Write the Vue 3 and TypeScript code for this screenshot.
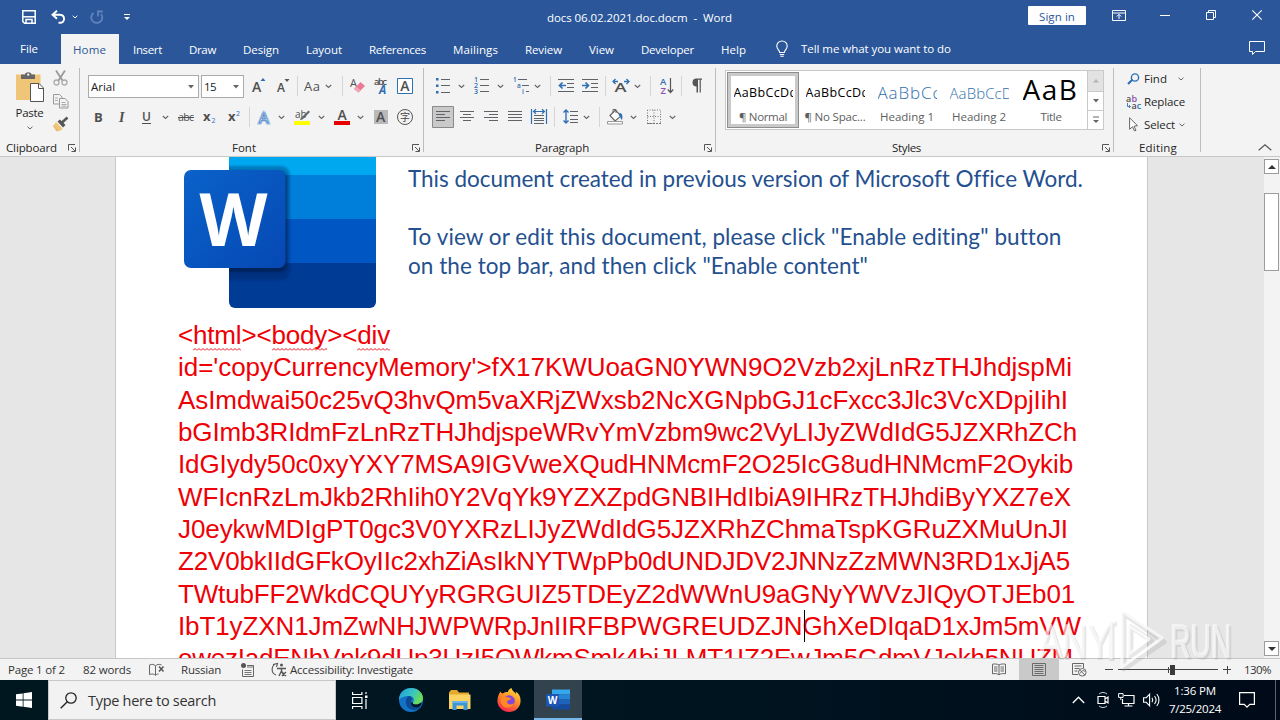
<script setup lang="ts">
import { h, type FunctionalComponent, type ObjectDirective } from 'vue'

// Tracks a label out (or in) so that it fills the given width in pixels.
const vFit: ObjectDirective<HTMLElement, number> = {
  mounted(el, { value }) {
    const count = (el.textContent ?? '').length
    const width = el.getBoundingClientRect().width
    if (count > 0) el.style.letterSpacing = `${(value - width) / count}px`
  },
}

const G = '#5f6368'
const B = '#2f6fb5'
const lines = (rows: number[][], color = G) =>
  rows.map(([x1, x2, y]) => `<path d="M${x1} ${y}H${x2}" stroke="${color}"/>`).join('')
const glyph = (x: number, y: number, s: number, text: string, extra = '') =>
  `<text x="${x}" y="${y}" font-size="${s}" font-family="Open Sans, sans-serif" fill="#505050" ${extra}>${text}</text>`

const wordApp =
  '<path d="M6 1.500h18v5H6z" fill="#35a7ec"/><path d="M6 6.500h18v5H6z" fill="#2585d8"/><path d="M6 11.500h18v5H6z" fill="#1b63bd"/><path d="M6 16.500h18v5H6z" fill="#164a9c"/><rect y="6" width="13" height="12.500" rx="1" fill="#1b55b5"/>' +
  '<text x="1.800" y="16" font-size="10" font-weight="700" font-family="Open Sans, sans-serif" fill="#fff">W</text>'

// name -> [width, height, markup]
const icons: Record<string, [number, number, string]> = {
  save: [14, 14, '<path d="M.8.8h12.400v12.400H2.500L.8 11.500z" fill="none" stroke="#fff" stroke-width="1.500"/><path d="M1 6.800h12" stroke="#fff" stroke-width="1.500"/><path d="M4 13V9.500h6V13" fill="none" stroke="#fff" stroke-width="1.500"/>'],
  undo: [14, 14, '<path d="M6 .8 1.500 4.800 6 8.800M1.800 4.800H8.500c6 0 6 8 .5 8H7.500" fill="none" stroke="#fff" stroke-width="1.900"/>'],
  redo: [14, 14, '<path d="M3.500 3A5.500 5.500 0 1 0 11 4M12.800 1.500H8V6.500" fill="none" stroke="#5f83ba" stroke-width="1.800"/>'],
  chevW: [6, 4, '<path d="M.7.7 3 3 5.300.7" fill="none" stroke="#fff"/>'],
  custom: [6, 8, '<path d="M0 1.500h6" stroke="#fff"/><path d="M0 4h6L3 7z" fill="#fff"/>'],
  ribbon: [14, 11, '<path d="M.5.500h13v10H.500zM.5 3h13" fill="none" stroke="#fff"/><path d="M7 9V4.500M4.800 6.500 7 4.300l2.200 2.200" fill="none" stroke="#fff"/>'],
  min: [10, 10, '<path d="M0 5.500h10" stroke="#fff"/>'],
  restore: [10, 10, '<path d="M.5 2.500h7v7h-7zM2.500 2V.500h7v7H8" fill="none" stroke="#fff"/>'],
  close: [10, 10, '<path d="M.3.300l9.400 9.400M9.700.300.300 9.700" stroke="#fff" stroke-width="1.100"/>'],
  bulb: [12, 16, '<path d="M3.700 11.500C3.500 9 .8 8.300.8 5a5.200 5 0 0 1 10.400 0c0 3.300-2.700 4-2.900 6.500zM3.800 13.500h4.400M4.300 15.300h3.400" fill="none" stroke="#fff" stroke-width="1.100"/>'],
  comment: [16, 14, '<path d="M.5.500h15v10H6.500L3.500 13.500V10.500H.500z" fill="none" stroke="#fff"/>'],
  chev: [7, 24, '<path d="M.8 11 3.500 13.500 6.200 11" fill="none" stroke="#666" stroke-width="1.100"/>'],
  chevS: [6, 4, '<path d="M.5.700 3 3 5.500.700" fill="none" stroke="#666"/>'],
  sep: [1, 24, '<path d="M.5 2v20" stroke="#d5d5d5"/>'],
  paste: [28, 32, '<path d="M0 3.500h24.500V29H0z" fill="#efc578"/><path d="M5 8V3.500h4C9 .500 15.500.500 15.500 3.500H19V8z" fill="#666"/><circle cx="12.200" cy="3.600" r="1.200" fill="#f3f3f3"/><path d="M14.500 12.500h8.500l4.500 4.500v13.500h-13z" fill="#fff" stroke="#555"/><path d="M22.500 12.500v5h5" fill="none" stroke="#555"/>'],
  cut: [15, 16, '<path d="M3 .500l6.500 10M12 .500 5.500 10.500" stroke="#9a9a9a" stroke-width="1.800"/><circle cx="3.500" cy="12.500" r="2.500" fill="none" stroke="#aaa" stroke-width="1.300"/><circle cx="11.500" cy="12.500" r="2.500" fill="none" stroke="#aaa" stroke-width="1.300"/>'],
  copy: [16, 15, '<g fill="#f3f3f3" stroke="#999"><path d="M.5.500h6l2.500 2.500v7H.500z"/><path d="M6.500 4.500h5.500l3 3v6.500H6.500z"/></g><path d="M2 4h3M2 6.500h3M8.500 8.500h4M8.500 10.500h5M8.500 12.200h5" stroke="#aaa"/>'],
  painter: [16, 15, '<path d="M1 7.500 7 13.500 3.500 14.500 0 9z" fill="#e8bd70"/><path d="M3 5 9.500 11.500 7.500 14 1 8z" fill="#efc578"/><path d="M4.500 4.500 7 2.500 12.500 8l-2.500 2.500z" fill="#555"/><path d="M9 5.500 14.500.500" stroke="#555" stroke-width="2.500"/>'],
  bold: [9, 24, glyph(0, 16.5, 13, 'B', 'font-weight="700"')],
  italic: [9, 24, glyph(1, 16.5, 14, 'I', 'font-style="italic" font-weight="600" style="font-family:Liberation Serif"')],
  under: [10, 24, glyph(0, 16, 12, 'U', 'font-weight="600"') + '<path d="M0 18.500h9" stroke="#505050"/>'],
  strike: [16, 24, glyph(0, 16, 10.5, 'abc', 'textLength="16"') + '<path d="M0 12.500h16" stroke="#505050"/>'],
  sub: [13, 24, glyph(0, 16, 13, 'x', 'font-weight="700"') + `<text x="8.500" y="18" font-size="7" font-family="Open Sans" fill="${B}">2</text>`],
  sup: [13, 24, glyph(0, 16, 13, 'x', 'font-weight="700"') + `<text x="8" y="11" font-size="7" font-family="Open Sans" fill="${B}">2</text>`],
  fx: [14, 24, `<text x="1" y="17.500" font-size="15" font-family="Open Sans" fill="#fff" stroke="#9cc0ea" stroke-width="2.800" textLength="12">A</text><text x="1" y="17.500" font-size="15" font-family="Open Sans" fill="#fff" stroke="${B}" stroke-width=".6" textLength="12">A</text>`],
  hl: [17, 24, glyph(1, 13, 10, 'ab') + '<path d="M6.500 13.500 14.500 5.500l1.500 1.500L8.500 14.500 6 15z" fill="#666"/><path d="M0 16h16v4H0z" fill="#ff0"/>'],
  fc: [17, 24, glyph(3.5, 15, 14, 'A', 'font-weight="600" textLength="9.500"') + '<path d="M0 16h16v4H0z" fill="#e80000"/>'],
  shade: [14, 24, '<path d="M0 5h14v14H0z" fill="#b9b9b9"/>' + glyph(2, 17, 14, 'A', 'font-weight="600"')],
  circ: [16, 24, '<circle cx="8" cy="12" r="7.500" fill="none" stroke="#555"/><text x="3" y="15.700" font-size="10" font-family="Noto Sans CJK SC, sans-serif" fill="#444">字</text>'],
  grow: [14, 24, glyph(0, 17.5, 14, 'A', 'font-weight="600"') + `<path d="M8.500 7 11 4l2.500 3z" fill="${B}"/>`],
  shrink: [12, 24, glyph(0, 17.5, 12, 'A', 'font-weight="600"') + `<path d="M7.500 5h5L10 8z" fill="#555"/>`],
  caseA: [16, 24, glyph(0, 16.5, 13, 'Aa', 'textLength="16"')],
  eraser: [15, 24, glyph(0, 12.5, 11, 'A') + '<path d="M4 15 10.500 8 15 12 8.500 18.500z" fill="#ec7a94"/><path d="M4 15l2.500-2.600 4.200 3.900-2.200 2.200z" fill="#f3a5b6"/>'],
  phon: [14, 24, glyph(0, 11, 9.5, 'abc', 'textLength="13" font-weight="600"') + `<text x="5" y="20" font-size="11.500" font-weight="700" font-style="italic" font-family="Open Sans" fill="${B}">A</text>`],
  boxA: [16, 24, `<path d="M.5 4.500h15v15H.500z" fill="#fff" stroke="${B}"/>` + glyph(3.2, 17, 14, 'A', 'font-weight="600"')],
  bullets: [14, 24, `<g fill="${B}"><path d="M0 4h2.500v2.500H0zM0 10.500h2.500V13H0zM0 17h2.500v2.500H0z"/></g>` + lines([[5, 14, 5.5], [5, 14, 11.5], [5, 14, 18.5]])],
  number: [15, 24, `<g font-size="7" font-weight="600" font-family="Open Sans" fill="${B}"><text y="8">1</text><text y="14">2</text><text y="20">3</text></g>` + lines([[6, 15, 5.5], [6, 15, 11.5], [6, 15, 17.5]])],
  multi: [17, 24, `<g font-size="6.500" font-weight="600" font-family="Open Sans" fill="${B}"><text y="8">1</text><text x="4" y="14">a</text><text x="9" y="20">i</text></g>` + lines([[5, 14, 5.5], [9, 16, 11.5], [13, 16, 17.5]])],
  dec: [16, 24, lines([[0, 16, 5.5], [9, 16, 9.5], [9, 16, 13.5], [0, 16, 17.5]]) + `<path d="M8 11.500H2M4.500 8.500l-3 3 3 3" fill="none" stroke="${B}" stroke-width="1.700"/>`],
  inc: [16, 24, lines([[0, 16, 5.5], [9, 16, 9.5], [9, 16, 13.5], [0, 16, 17.5]]) + `<path d="M0 11.500H6M3.500 8.500l3 3-3 3" fill="none" stroke="${B}" stroke-width="1.700"/>`],
  asian: [16, 24, glyph(1.5, 18, 12.5, 'A', 'font-weight="600" textLength="12" lengthAdjust="spacingAndGlyphs"') + `<path d="M0 7.500h5M2.500 5 0 7.500 2.500 10M11 7.500h5M13.500 5 16 7.500 13.500 10" fill="none" stroke="${B}" stroke-width="1.300"/>`],
  sort: [14, 24, `<text y="11" font-size="9.500" font-weight="600" font-family="Open Sans" fill="${B}">A</text><text x=".5" y="19.500" font-size="9.500" font-weight="600" font-family="Open Sans" fill="#8a4fb0">Z</text><path d="M10.500 4v14M7.800 15.500l2.700 3 2.700-3" fill="none" stroke="#555" stroke-width="1.200"/>`],
  pil: [10, 24, '<path d="M4.500 12.500a4 4 0 0 1 0-8H10v1.200H8.800v12.800H7.600V5.700H6v12.800H4.500z" fill="#555"/>'],
  left: [14, 24, '<path d="M-3.500 1.500h21v21h-21z" fill="#c9c9c9" stroke="#8a8a8a"/>' + lines([[0, 14, 6.5], [0, 9, 9.5], [0, 14, 12.5], [0, 9, 15.5]])],
  center: [14, 24, lines([[0, 14, 6.5], [3, 11, 9.5], [0, 14, 12.5], [3, 11, 15.5]])],
  right: [14, 24, lines([[0, 14, 6.5], [5, 14, 9.5], [0, 14, 12.5], [5, 14, 15.5]])],
  just: [14, 24, lines([[0, 14, 6.5], [0, 14, 9.5], [0, 14, 12.5], [0, 14, 15.5]])],
  dist: [16, 24, lines([[3, 13, 10.5], [3, 13, 13.5], [3, 13, 15.5], [3, 13, 18.5]]) + `<path d="M.5 4v15M15.500 4v15M3 6.500h10M5 4.300 2.500 6.500 5 8.700M11 4.300l2.500 2.200L11 8.700" fill="none" stroke="${B}" stroke-width="1.200"/>`],
  ls: [15, 24, lines([[7, 15, 6.5], [7, 15, 10.5], [7, 15, 14.5], [7, 15, 17.5]]) + `<path d="M3 5v13M.5 7.500 3 5l2.500 2.500M.5 15.500 3 18l2.500-2.500" fill="none" stroke="${B}" stroke-width="1.400"/>`],
  fill: [17, 24, `<path d="M3 10.500 8.500 5 14 11l-6 5z" fill="#fff" stroke="#666" stroke-width="1.200"/><path d="M6 8V4.500h3V8" fill="none" stroke="#666"/><path d="M13 8c2.500 0 3 4 2 7-1.500-1-1.500-4-3.500-5z" fill="${B}"/><path d="M.5 16.500h15v2.500H.500z" fill="#fff" stroke="#999"/>`],
  border: [14, 24, '<path d="M.5 5v13.500h13V5zM7 5v13.500M.5 11.500h13" fill="none" stroke="#777" stroke-dasharray="1 1.500"/><path d="M0 18.500h14" stroke="#777" stroke-dasharray="2 1"/>'],
  launch: [8, 8, '<path d="M.5 6.500V.500H7M3 3l4 4M7.500 3.500v4h-4" fill="none" stroke="#555"/>'],
  find: [13, 12, `<path d="M1 11 5.500 6.500" stroke="${B}" stroke-width="2.200"/><circle cx="8" cy="4.500" r="3.600" fill="none" stroke="${B}" stroke-width="1.400"/>`],
  replace: [16, 16, glyph(0, 7.5, 9, 'a', 'font-weight="600"') + `<text x="5.500" y="7.500" font-size="9" font-weight="600" font-family="Open Sans" fill="#8a4fb0">b</text><text x="5.500" y="15" font-size="9" font-weight="600" font-family="Open Sans" fill="#505050">a<tspan fill="${B}">c</tspan></text><path d="M1.500 9v3.500H4M3 11l1.500 1.500L3 14" fill="none" stroke="${B}" stroke-width=".9"/>`],
  select: [9, 15, '<path d="M.6.800v11.500l2.900-2.500 2 4.200 1.500-.8-2-4 3.500-.5z" fill="#fff" stroke="#666"/>'],
  collapse: [14, 7, '<path d="M.7 6.300 7 .800l6.300 5.500" fill="none" stroke="#555" stroke-width="1.200"/>'],
  tri: [6, 4, '<path d="M0 0h6L3 3.500z" fill="#666"/>'],
  triUp: [8, 4, '<path d="M0 4h8L4 0z" fill="#333"/>'],
  triDn: [8, 4, '<path d="M0 0h8L4 4z" fill="#333"/>'],
  triOff: [6, 4, '<path d="M0 3.500h6L3 0z" fill="#b5b5b5"/>'],
  more: [8, 8, '<path d="M1 1h6" stroke="#666"/><path d="M1 4h6L4 7z" fill="#666"/>'],
  proof: [16, 14, '<path d="M.5 2c2-1 5-1 6 1 1-2 4-2 6-1M.5 2v9.500c2-.8 5-.8 6 1 .5-1 1.500-1.500 3-1.500M6.500 3v9" fill="none" stroke="#666"/><path d="M10 3.500l4.500 5M14.500 3.500l-4.500 5" stroke="#555" stroke-width="1.500"/>'],
  macro: [13, 14, '<circle cx="2.500" cy="2.500" r="2.500" fill="#555"/><path d="M6 2.500h6.500v11H1.500V6.500" fill="none" stroke="#666"/><path d="M6 4h6.500M3.500 7.500h7M3.500 9.500h7M3.500 11.500h7" stroke="#777"/>'],
  access: [16, 15, '<path d="M6 1.500A6 6 0 0 0 5 13M2 2.500 6.500 1.500 5.500 5" fill="none" stroke="#555" stroke-width="1.100"/><circle cx="10.500" cy="3" r="1.500" fill="#555"/><path d="M6 6.500h9M10.500 6v4M10.500 9 8 14M10.500 9l2.500 5M11 10l4 4M15 10l-4 4" fill="none" stroke="#555" stroke-width="1.400"/>'],
  read: [14, 13, '<path d="M7 2C5 .8 2.500.8.500 1.200v9.600c2-.4 4.500-.4 6.500 1 2-1.400 4.500-1.400 6.500-1V1.200C11.500.8 9 .8 7 2zM7 2v10M2 4h3.500M2 6h3.500M2 8h3.500M8.500 4H12M8.500 6H12M8.500 8H12" fill="none" stroke="#666"/>'],
  print: [14, 13, '<path d="M.5.500h13v12H.500zM2.500 2.500h9M2.500 4.500h9M2.500 6.500h9M2.500 8.500h9M2.500 10.500h9" fill="none" stroke="#6b6b6b"/>'],
  web: [15, 14, '<path d="M6 11.500H.500v-11h11V5M2.500 3h7M2.500 5.500h5M2.500 8h3" fill="none" stroke="#666"/><circle cx="10.300" cy="9.300" r="3.800" fill="#f3f3f3" stroke="#666"/><path d="M7.800 7l5 5M8 10.500c2-3 3-3.500 5-2" fill="none" stroke="#666"/>'],
  minus: [8, 8, '<path d="M0 3.500h8" stroke="#444"/>'],
  plus: [8, 8, '<path d="M0 3.500h8M4.500 0v8" stroke="#444"/>'],
  slider: [100, 12, '<path d="M0 5.500h100" stroke="#444"/><path d="M50.500 3v6" stroke="#444"/><path d="M52 1h5v10h-5z" fill="#3a3a3a"/>'],
  start: [16, 16, '<path d="M0 2.300 6.700 1.400v6.200H0zM7.500 1.300 16 0v7.600H7.500zM0 8.500h6.700v6.200L0 13.800zM7.500 8.500H16V16l-8.500-1.200z" fill="#fff"/>'],
  search: [17, 17, '<circle cx="11" cy="6" r="5.200" fill="none" stroke="#222" stroke-width="1.300"/><path d="M7.300 9.700.700 16.300" stroke="#222" stroke-width="1.400"/>'],
  taskview: [16, 17, '<path d="M.6 0v2.500h9.300V0M.6 5.500h9.300v6H.600zM.6 17v-2.500h9.300V17M14 0v2M14 7v10" fill="none" stroke="#fff" stroke-width="1.200"/><path d="M13 3.500h2.500V6H13z" fill="#fff"/>'],
  edge: [24, 24, '<defs><linearGradient id="eg" x1="0" y1="0" x2="1" y2=".4"><stop offset="0" stop-color="#1e9be2"/><stop offset=".6" stop-color="#38c6c0"/><stop offset="1" stop-color="#6bdc59"/></linearGradient></defs><circle cx="12" cy="12" r="12" fill="#1272c8"/><path d="M0 12C0 4 6 0 12 0c7 0 12 5 12 10 0 4-3 6.500-6.500 6.500-3 0-4-1-3.500-2 2-3 .5-6.500-4-6.500C5 8 1 10 0 12z" fill="url(#eg)"/><path d="M10 8C5.500 10 5.500 18 11 21c3.500 2 8.500.8 10.500-2.500-4 1.800-8.500.5-9.500-3-.5-2.500.5-3.500 1-4.500C12.800 9.500 11.800 8 10 8z" fill="#0d4a94"/><path d="M13.800 14.500c-1 2 4.500 3.500 8.500-.2.800 1.500-1 4.700-3.500 5-4 .8-7-1.800-6.800-4.800z" fill="#001420"/>'],
  folder: [22, 20, '<path d="M0 2.500 2 0h6l2 2.500h10V6H0z" fill="#e6a92c"/><path d="M0 4.500h21.500V19H0z" fill="#fbd464"/><path d="M3.500 11h15v9h-4v-4.500h-7V20h-4z" fill="#3b95d9"/><path d="M3.500 11h15v2h-15z" fill="#66b4ea"/>'],
  fox: [24, 24, '<defs><linearGradient id="ff" x1=".8" y1="0" x2=".3" y2="1"><stop offset="0" stop-color="#ffe040"/><stop offset=".45" stop-color="#ff9326"/><stop offset="1" stop-color="#f5214f"/></linearGradient></defs><path d="M3.500 3.500C4 5 5 5 6 5.500 8 4 10 4 11 4.200 11 2.500 12.500.500 14.500 0c.3 2.500 3 4 4.500 6 0-1-.2-2-.5-2.500C22 5.500 24 9 23.500 14 23 20 18 24 12 24S1 19.500.500 14C.2 10 1.500 6 3.500 3.500z" fill="url(#ff)"/><circle cx="12" cy="13" r="5.800" fill="#8447d8"/><path d="M5 8.500c2 0 4-.5 6 .8 1 .5 3 .7 3 1.700-1.500 1.500-3.500 1-4 2.500 0 3 4 4 7 1.500-1 4.500-7 6-10.500 3.500C3.500 16 3 11.500 5 8.500z" fill="#ff8a24"/>'],
  word: [24, 24, wordApp],
  up: [13, 8, '<path d="M.8 7 6.500 1.200 12.200 7" fill="none" stroke="#fff" stroke-width="1.300"/>'],
  meet: [12, 16, '<path d="M1 4.500h7v7H1zM8 7l3-2v6L8 9" fill="none" stroke="#fff" stroke-width="1.200"/><path d="M2 2c2.500-2 5.500-2 8 0M2 14c2.500 2 5.500 2 8 0" fill="none" stroke="#ccc"/>'],
  net: [17, 14, '<path d="M6 2.500h10v8H4.500V6M10.500 10.500v3M6.500 13h8" fill="none" stroke="#fff" stroke-width="1.200"/><path d="M.6.600h4.500v3.800H.600zM2.800 4.500V7" fill="none" stroke="#fff"/>'],
  vol: [17, 14, '<path d="M.6 4.700h2.700L6.600 1.200v11.600L3.300 9.300H.600z" fill="none" stroke="#fff" stroke-width="1.100"/><path d="M9 4.800c1 1.500 1 3 0 4.400M11.500 3c2 2.500 2 5.500 0 8M13.800 1c2.900 3.500 2.900 8.500 0 12" fill="none" stroke="#fff" stroke-width="1.100"/>'],
  notif: [16, 16, '<path d="M.6.600h14.800v11.800h-4.600L8 15.200 5.200 12.400H.600z" fill="none" stroke="#fff" stroke-width="1.200"/>'],
}

const Icon: FunctionalComponent<{ name: string }> = ({ name }) => {
  const [w, ht, body] = icons[name]
  return h('svg', { class: 'icon', width: w, height: ht, viewBox: `0 0 ${w} ${ht}`, innerHTML: body })
}
Icon.props = ['name']

type Label = [string, number]
type Tool = [string, number]

const tabs: Label[] = [['Home', 33], ['Insert', 29], ['Draw', 27], ['Design', 36], ['Layout', 36], ['References', 57], ['Mailings', 45], ['Review', 37], ['View', 25], ['Developer', 53], ['Help', 25]]

const fontTop: Tool[] = [['grow', 25], ['shrink', 20], ['sep', 7], ['caseA', 21], ['chev', 17], ['sep', 8], ['eraser', 24], ['phon', 23], ['boxA', 16]]
const fontBottom: Tool[] = [['bold', 24], ['italic', 24], ['under', 20], ['chev', 16], ['strike', 25], ['sub', 25], ['sup', 21], ['sep', 9], ['fx', 20], ['chev', 16], ['hl', 24], ['chev', 16], ['fc', 23], ['chev', 17], ['shade', 23], ['circ', 16]]
const paraTop: Tool[] = [['bullets', 22], ['chev', 16], ['number', 23], ['chev', 16], ['multi', 21], ['chev', 16], ['sep', 8], ['dec', 24], ['inc', 23], ['sep', 8], ['asian', 21], ['chev', 16], ['sep', 10], ['sort', 21], ['sep', 11], ['pil', 10]]
const paraBottom: Tool[] = [['left', 24], ['center', 24], ['right', 24], ['just', 23], ['dist', 23], ['sep', 9], ['ls', 20], ['chev', 16], ['sep', 8], ['fill', 23], ['chev', 17], ['border', 22], ['chev', 7]]

const styles = [
  { sample: 'AaBbCcDd', fit: 64, kind: 'normal', name: '¶ Normal', w: 48 },
  { sample: 'AaBbCcDd', fit: 64, kind: 'normal', name: '¶ No Spac...', w: 61 },
  { sample: 'AaBbCc', fit: 64, kind: 'h1', name: 'Heading 1', w: 54 },
  { sample: 'AaBbCcD', fit: 63, kind: 'h2', name: 'Heading 2', w: 54 },
  { sample: 'AaB', fit: 56, kind: 'title', name: 'Title', w: 21 },
]

const editing = [
  { icon: 'find', name: 'Find', w: 23, menu: true },
  { icon: 'replace', name: 'Replace', w: 41, menu: false },
  { icon: 'select', name: 'Select', w: 31, menu: true },
]

const banner: Label[] = [
  ['This document created in previous version of Microsoft Office Word.', 673],
  ['', 0],
  ['To view or edit this document, please click "Enable editing" button', 653],
  ['on the top bar, and then click "Enable content"', 460],
]

const body: Label[] = [
  ["id='copyCurrencyMemory'>fX17KWUoaGN0YWN9O2Vzb2xjLnRzTHJhdjspMi", 894],
  ['AsImdwai50c25vQ3hvQm5vaXRjZWxsb2NcXGNpbGJ1cFxcc3Jlc3VcXDpjIihI', 890],
  ['bGImb3RIdmFzLnRzTHJhdjspeWRvYmVzbm9wc2VyLIJyZWdIdG5JZXRhZCh', 899],
  ['IdGIydy50c0xyYXY7MSA9IGVweXQudHNMcmF2O25IcG8udHNMcmF2Oykib', 895],
  ['WFIcnRzLmJkb2RhIih0Y2VqYk9YZXZpdGNBIHdIbiA9IHRzTHJhdiByYXZ7eX', 893],
  ['J0eykwMDIgPT0gc3V0YXRzLIJyZWdIdG5JZXRhZChmaTspKGRuZXMuUnJI', 890],
  ['Z2V0bkIIdGFkOyIIc2xhZiAsIkNYTWpPb0dUNDJDV2JNNzZzMWN3RD1xJjA5', 892],
  ['TWtubFF2WkdCQUYyRGRGUIZ5TDEyZ2dWWnU9aGNyYWVzJIQyOTJEb01', 897],
  ['IbT1yZXN1JmZwNHJWPWRpJnIIRFBPWGREUDZJNGhXeDIqaD1xJm5mVW', 903],
  ['owezIadENhVnk9dUp3UzI5OWkmSmk4biJLMT1IZ2EwJm5GdmVJekh5NUZM', 895],
]
</script>

<template>
  <div class="screen">
    <header class="titlebar">
      <div class="quick">
        <Icon name="save" /><Icon name="undo" /><Icon name="chevW" /><Icon name="redo" /><Icon name="custom" />
      </div>
      <span v-fit="185" class="t doc-title">docs 06.02.2021.doc.docm&nbsp; -&nbsp; Word</span>
      <button class="signin"><span v-fit="36" class="t">Sign in</span></button>
      <div class="window"><Icon name="ribbon" /><Icon name="min" /><Icon name="restore" /><Icon name="close" /></div>
    </header>

    <nav class="tabs">
      <span v-fit="18" class="t file">File</span>
      <div v-for="([name, w], i) in tabs" :key="name" class="tab" :class="{ active: i === 0 }">
        <span v-fit="w" class="t">{{ name }}</span>
      </div>
      <Icon name="bulb" class="bulb" />
      <span v-fit="150" class="t tell">Tell me what you want to do</span>
      <Icon name="comment" class="comment" />
    </nav>

    <section class="ribbon">
      <div class="group clipboard">
        <div class="clip-body">
          <div class="paste"><Icon name="paste" /><span v-fit="28" class="t">Paste</span><Icon name="chevS" /></div>
          <div class="clip-side"><Icon name="cut" /><Icon name="copy" /><Icon name="painter" /></div>
        </div>
        <footer><span v-fit="51" class="t">Clipboard</span><Icon name="launch" /></footer>
      </div>

      <div class="group font">
        <div class="row first">
          <div class="combo family"><span v-fit="24" class="t">Arial</span><Icon name="tri" /></div>
          <div class="combo size"><span v-fit="12" class="t">15</span><Icon name="tri" /></div>
          <div v-for="([name, w], i) in fontTop" :key="i" class="tool" :style="{ width: w + 'px' }"><Icon :name="name" /></div>
        </div>
        <div class="row second">
          <div v-for="([name, w], i) in fontBottom" :key="i" class="tool" :style="{ width: w + 'px' }"><Icon :name="name" /></div>
        </div>
        <footer><span v-fit="24" class="t">Font</span><Icon name="launch" /></footer>
      </div>

      <div class="group paragraph">
        <div class="row first">
          <div v-for="([name, w], i) in paraTop" :key="i" class="tool" :style="{ width: w + 'px' }"><Icon :name="name" /></div>
        </div>
        <div class="row second">
          <div v-for="([name, w], i) in paraBottom" :key="i" class="tool" :style="{ width: w + 'px' }"><Icon :name="name" /></div>
        </div>
        <footer><span v-fit="54" class="t">Paragraph</span><Icon name="launch" /></footer>
      </div>

      <div class="group styles">
        <div class="gallery">
          <div v-for="(s, i) in styles" :key="s.name" class="style" :class="{ chosen: i === 0 }">
            <div class="sample" :class="s.kind"><span v-fit="s.fit" class="t">{{ s.sample }}</span></div>
            <span v-fit="s.w" class="t style-name">{{ s.name }}</span>
          </div>
          <div class="pager"><div class="off"><Icon name="triOff" /></div><div><Icon name="tri" /></div><div><Icon name="more" /></div></div>
        </div>
        <footer><span v-fit="29" class="t">Styles</span><Icon name="launch" /></footer>
      </div>

      <div class="group editing">
        <ul>
          <li v-for="e in editing" :key="e.name">
            <span class="slot"><Icon :name="e.icon" /></span><span v-fit="e.w" class="t">{{ e.name }}</span><Icon v-if="e.menu" name="chevS" :class="e.icon" />
          </li>
        </ul>
        <footer><span v-fit="38" class="t">Editing</span></footer>
      </div>
      <Icon name="collapse" class="collapse" />
    </section>

    <main class="workspace">
      <article class="page">
        <div class="banner">
          <svg class="logo" width="194" height="151" viewBox="0 0 194 151">
            <defs>
              <linearGradient id="tile" x1="0" y1="0" x2="1" y2="1">
                <stop offset="0" stop-color="#0a62c9" /><stop offset="1" stop-color="#0648b4" />
              </linearGradient>
              <clipPath id="sheet"><path d="M46 -10H193V145a6 6 0 0 1-6 6H52a6 6 0 0 1-6-6z" /></clipPath>
              <filter id="soft" x="-20%" y="-20%" width="140%" height="140%"><feGaussianBlur stdDeviation="1" /></filter>
            </defs>
            <g clip-path="url(#sheet)">
              <path d="M46 0h147v18H46z" fill="#00a8f0" /><path d="M46 18h147v44H46z" fill="#007fda" />
              <path d="M46 62h147v44H46z" fill="#0057c3" /><path d="M46 106h147v45H46z" fill="#003b95" />
              <rect x="10" y="9" width="97" height="114" rx="9" fill="#001f55" opacity=".32" filter="url(#soft)" />
              <rect x="10" y="14" width="94" height="101" rx="8" fill="#001436" opacity=".5" filter="url(#soft)" />
            </g>
            <rect x="1" y="13" width="101.500" height="98" rx="7" fill="url(#tile)" />
            <text x="16.500" y="89" class="logo-letter" textLength="68" lengthAdjust="spacingAndGlyphs">W</text>
          </svg>
          <div class="notice">
            <p v-for="([text, w], i) in banner" :key="i"><span v-fit="w" class="t">{{ text }}</span></p>
          </div>
        </div>
        <div class="copy">
          <p><span v-fit="212" class="t">&lt;<u>html</u>&gt;&lt;<u>body</u>&gt;&lt;<u>div</u></span></p>
          <p v-for="([text, w], i) in body" :key="i"><span v-fit="w" class="t">{{ text }}</span></p>
          <i class="caret"></i>
        </div>
      </article>
      <aside class="scroll">
        <div class="arrow"><Icon name="triUp" /></div>
        <div class="thumb"></div>
        <div class="arrow end"><Icon name="triDn" /></div>
      </aside>
    </main>

    <div class="status">
      <span v-fit="57" class="t">Page 1 of 2</span><span v-fit="48" class="t words">82 words</span>
      <Icon name="proof" class="proof" /><span v-fit="40" class="t lang">Russian</span>
      <Icon name="macro" class="macro" /><Icon name="access" class="access" /><span v-fit="123" class="t inv">Accessibility: Investigate</span>
      <div class="views">
        <div><Icon name="read" /></div><div class="on"><Icon name="print" /></div><div><Icon name="web" /></div>
      </div>
      <div class="zoomer"><Icon name="minus" /><Icon name="slider" /><Icon name="plus" /></div>
      <span v-fit="27" class="t pct">130%</span>
    </div>

    <div class="taskbar">
      <div class="start"><Icon name="start" /></div>
      <div class="searchbox"><Icon name="search" /><span v-fit="128" class="t">Type here to search</span></div>
      <div class="app tv"><Icon name="taskview" /></div>
      <div class="app"><Icon name="edge" /></div>
      <div class="app"><Icon name="folder" /></div>
      <div class="app"><Icon name="fox" /></div>
      <div class="app running"><Icon name="word" /></div>
      <div class="tray"><Icon name="up" /><Icon name="meet" /><Icon name="net" /><Icon name="vol" /></div>
      <div class="clock"><span v-fit="42" class="t">1:36 PM</span><span v-fit="52" class="t">7/25/2024</span></div>
      <Icon name="notif" class="notif" />
      <div class="peek"></div>
    </div>

    <svg class="mark" width="200" height="70" viewBox="0 0 200 70">
      <g class="mark-shade"><text x="6" y="53" textLength="72" lengthAdjust="spacingAndGlyphs">ANY</text><text x="138" y="53" textLength="61" lengthAdjust="spacingAndGlyphs">RUN</text></g>
      <g class="mark-face"><text x="4" y="51" textLength="72" lengthAdjust="spacingAndGlyphs">ANY</text><text x="136" y="51" textLength="61" lengthAdjust="spacingAndGlyphs">RUN</text></g>
      <path d="M78 55V18h5M90 8v55l40-27zM97 21v29l21-15z" fill="none" stroke="#888" stroke-width="5" opacity=".2" stroke-linejoin="round" />
      <path d="M77 53V16h5M88 5l40 27-40 29V5M95 20v28l20-15z" fill="none" stroke="#fff" stroke-width="3" opacity=".72" stroke-linejoin="round" />
    </svg>
  </div>
</template>

<style>
html, body { margin: 0; overflow: hidden; }
</style>

<style scoped>
.screen { position: relative; width: 1280px; height: 720px; overflow: hidden; display: flex; flex-direction: column; background: #e6e6e6; font: 11.5px/16px "Open Sans", "Noto Sans", sans-serif; color: #262626; }
.screen * { box-sizing: border-box; }
.icon { display: block; flex: none; overflow: visible; }
.t { display: inline-block; flex: none; width: max-content; white-space: pre; }
p, ul { margin: 0; padding: 0; list-style: none; }
button { border: 0; padding: 0; font: inherit; }

.titlebar { height: 34px; flex: none; background: #2b579a; color: #fff; display: flex; align-items: flex-start; }
.quick { width: 547px; height: 34px; padding-left: 22px; display: flex; align-items: center; }
.quick .icon:nth-child(2) { margin-left: 15px; }
.quick .icon:nth-child(3) { margin-left: 7px; }
.quick .icon:nth-child(4) { margin-left: 12px; }
.quick .icon:nth-child(5) { margin-left: 20px; }
.doc-title { margin-top: 10px; }
.signin { margin: 6px 0 0 296px; width: 58px; height: 19px; background: #fff; color: #2b579a; border-radius: 1px; display: flex; align-items: center; padding: 2px 0 0 11px; }
.window { display: flex; margin: 10px 0 0 26px; }
.window .icon:nth-child(2) { margin-left: 34px; }
.window .icon:nth-child(n + 3) { margin-left: 36px; }

.tabs { height: 30px; flex: none; background: #2b579a; color: #fff; display: flex; align-items: stretch; line-height: 31px; }
.file { margin: -1px 23px 0 20px; }
.tab { padding: 0 15px 0 12px; }
.tab.active { background: #f3f3f3; color: #2b579a; padding-right: 13px; margin-right: 2px; }
.bulb { margin: 7px 0 0 15px; }
.tell { margin: -1px 0 0 13px; }
.comment { margin: 7px 0 0 298px; }

.ribbon { height: 93px; flex: none; display: flex; background: #f3f3f3; border-bottom: 1px solid #c8c8c8; }
.group { position: relative; height: 92px; flex: none; display: flex; flex-direction: column; }
.group::after { content: ""; position: absolute; right: 0; top: 4px; height: 84px; border-right: 1px solid #bdbdbd; }
.group footer { display: flex; align-items: center; height: 16px; margin-top: auto; justify-content: space-between; }
.clipboard { width: 80px; }
.clipboard footer { padding: 0 4px 0 6px; }
.clip-body { display: flex; }
.paste { width: 39px; margin-left: 10px; padding-top: 7px; display: flex; flex-direction: column; align-items: center; }
.paste .t { margin: 2px 0 5px; }
.clip-side { margin: 6px 0 0 4px; display: flex; flex-direction: column; gap: 8px; }
.font { width: 344px; }
.font footer { padding: 0 4px 0 152px; }
.paragraph { width: 292px; }
.paragraph footer { padding: 0 4px 0 111px; }
.row { display: flex; height: 24px; }
.row.first { margin-top: 10px; }
.row.second { margin-top: 7px; }
.font .first { padding-left: 8px; }
.font .second { padding-left: 14px; }
.paragraph .row { padding-left: 12px; }
.tool { flex: none; display: flex; }
.combo { height: 23px; margin-top: 1px; border: 1px solid #ababab; background: #fff; display: flex; align-items: center; justify-content: space-between; padding: 0 4px 0 2px; color: #222; }
.family { width: 111px; margin-right: 2px; }
.size { width: 43px; margin-right: 8px; }
.styles { width: 398px; }
.styles footer { padding: 0 4px 0 176px; }
.gallery { display: flex; margin: 6px 0 0 9px; width: 379px; height: 60px; background: #fff; border: 1px solid #c9c9c9; padding-left: 1px; }
.style { width: 72px; height: 56px; margin-top: 1px; padding: 0 6px; display: flex; flex-direction: column; align-items: center; }
.chosen { box-shadow: inset 0 0 0 1px #8d8d8d, inset 0 0 0 4px #c9c9c9; }
.sample { width: 59px; height: 30px; margin-top: 6px; overflow: hidden; color: #000; display: flex; align-items: flex-end; }
.sample .t { line-height: 30px; height: 30px; }
.normal { font-size: 12.5px; }
.h1 { font-size: 17px; font-weight: 300; color: #2e6fae; }
.h2 { font-size: 15px; font-weight: 300; color: #2e6fae; }
.title { font-size: 28px; font-weight: 400; height: 24px; margin: 7px 0 5px; width: 57px; }
.title .t { height: 28px; line-height: 28px; }
.style-name { color: #5e5e5e; line-height: 16px; margin-top: 1px; }
.pager { width: 16px; margin-left: auto; border-left: 1px solid #c9c9c9; }
.pager div { height: 19px; display: flex; align-items: center; justify-content: center; border-top: 1px solid #c9c9c9; }
.pager .off { height: 20px; background: #e2e2e2; border: 0; }
.editing { width: 87px; }
.editing ul { padding: 3px 0 0 11px; }
.editing li { height: 23px; display: flex; align-items: center; }
.slot { width: 19px; display: flex; padding-left: 1px; }
.editing li:nth-child(1) .slot { padding-left: 2px; }
.editing li:nth-child(3) .slot { padding-left: 4px; }
.editing .find { margin-left: 11px; }
.editing .select { margin-left: 4px; }
.editing footer { padding-left: 25px; }
.collapse { margin: 80px 0 0 57px; }

.workspace { height: 501px; flex: none; display: flex; background: #e6e6e6; overflow: hidden; }
.page { width: 1033px; margin-left: 115px; background: #fff; border: solid #c9c9c9; border-width: 0 1px; padding-left: 62px; height: 501px; overflow: hidden; }
.banner { display: flex; height: 151px; }
.logo { margin-left: 5px; flex: none; }
.logo-letter { font: 700 74px "Open Sans", sans-serif; fill: #fff; }
.notice { margin: 7px 0 0 31px; font: 22.500px/29.100px Lato, sans-serif; color: #24508f; }
.notice p { height: 29.100px; }
.copy { position: relative; padding-top: 11px; font: 26px/32.350px "Liberation Sans", Arial, sans-serif; color: #ee0006; }
.copy p { height: 32.350px; white-space: nowrap; }
.copy u { text-decoration: none; padding-bottom: 1px; background: url("data:image/svg+xml,%3Csvg xmlns='http://www.w3.org/2000/svg' width='4' height='3'%3E%3Cpath d='M0 2.500 2 .5 4 2.500' fill='none' stroke='%23e8101a' stroke-width='1'/%3E%3C/svg%3E") repeat-x 0 100%; }
.caret { position: absolute; left: 626px; top: 302px; width: 1px; height: 32px; background: #000; }
.scroll { width: 16px; margin-left: auto; background: #f3f3f3; padding-top: 2px; display: flex; flex-direction: column; height: 501px; }
.arrow { width: 15px; height: 15px; border: 1px solid #9c9c9c; background: #fff; display: flex; align-items: center; justify-content: center; }
.thumb { width: 15px; height: 78px; margin-top: 19px; border: 1px solid #9c9c9c; background: #fff; }
.arrow.end { margin: auto 0 2px; }

.status { height: 22px; flex: none; background: #f3f3f3; border-top: 1px solid #c6c6c6; display: flex; align-items: center; padding-left: 8px; color: #333; }
.words { margin-left: 18px; }
.proof { margin-left: 18px; }
.lang { margin-left: 16px; }
.macro { margin-left: 20px; }
.access { margin-left: 17px; }
.inv { margin-left: 3px; }
.views { display: flex; margin-left: 566px; height: 21px; }
.views div { width: 40px; display: flex; align-items: center; justify-content: center; }
.views .on { background: #c9c9c9; }
.zoomer { display: flex; align-items: center; gap: 5px; margin-left: 6px; }
.pct { margin-left: 13px; }

.taskbar { height: 40px; flex: none; display: flex; align-items: center; background: linear-gradient(90deg, #001720, #001420 60%, #000a18); color: #fff; }
.start { width: 48px; padding-left: 16px; }
.searchbox { width: 288px; height: 40px; background: #f2f2f2; border: 1px solid #c8c8c8; color: #333; font-size: 14.5px; display: flex; align-items: center; padding-left: 11px; gap: 11px; }
.searchbox .t { padding-top: 1px; }
.app { width: 49px; height: 40px; display: flex; align-items: center; justify-content: center; }
.tv { width: 50px; padding-right: 2px; }
.running { width: 48px; margin-left: 1px; background: #33434d; border-bottom: 2px solid #76b9ed; padding-top: 1px; }
.tray { display: flex; align-items: center; margin-left: 490px; }
.tray .icon:nth-child(2) { margin-left: 12px; }
.tray .icon:nth-child(3) { margin-left: 9px; }
.tray .icon:nth-child(4) { margin-left: 8px; }
.clock { width: 54px; margin-left: 8px; display: flex; flex-direction: column; align-items: center; gap: 2px; }
.notif { margin-left: 17px; }
.peek { width: 1px; height: 40px; background: #5a6470; margin-left: 20px; }

.mark { position: absolute; left: 1034px; top: 606px; pointer-events: none; }
.mark text { font: 400 47px "Liberation Sans", sans-serif; stroke-width: 1.500px; }
.mark-shade { fill: #888; stroke: #888; opacity: .2; }
.mark-face { fill: #fff; stroke: #fff; opacity: .62; }
</style>
